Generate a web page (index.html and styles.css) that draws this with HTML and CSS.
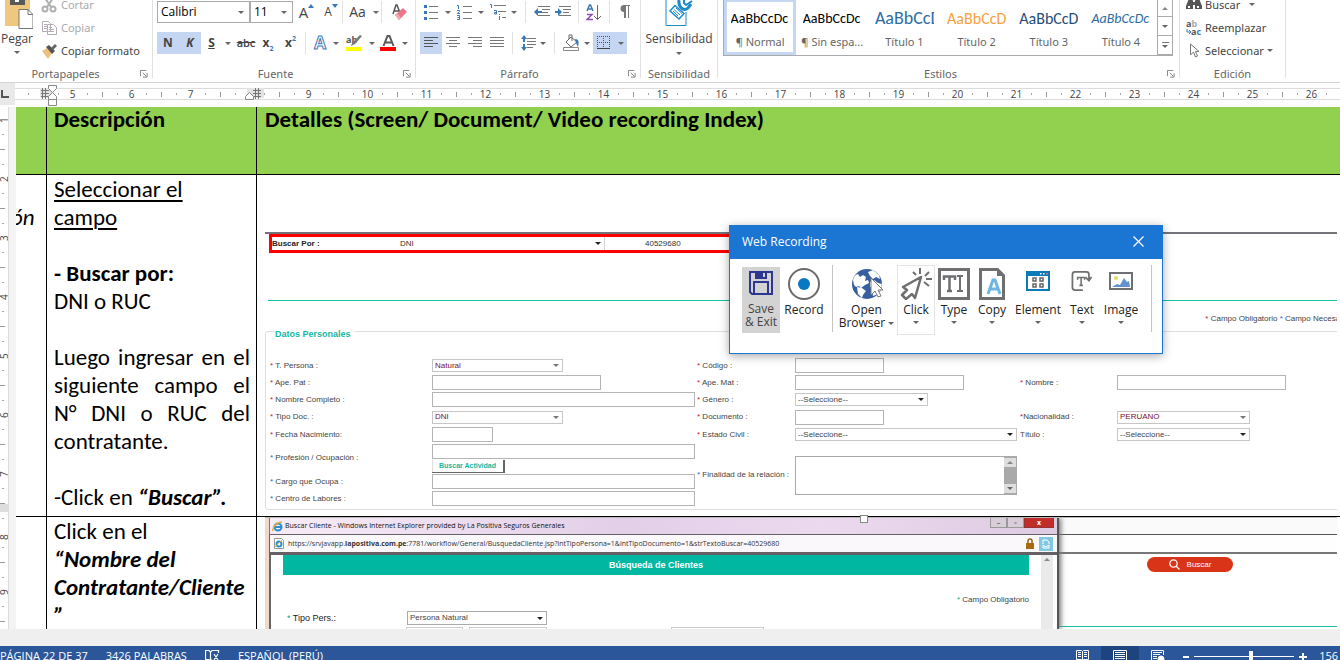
FILE: index.html
```html
<!DOCTYPE html>
<html lang="es">
<head>
<meta charset="utf-8">
<title>Documento</title>
<link rel="stylesheet" href="styles.css">
</head>
<body>
<header class="ribbon">
  <section class="group clipboard">
    <div class="clip-body">
      <button class="paste">
        <svg width="32" height="30" viewBox="0 0 32 30"><path d="M4 0h25v26H4z" fill="#edc87e"/><path d="M9 0h15v5H9z" fill="#595959"/><path d="M14 0h4v2h-4z" fill="#fff"/><path d="M18 9.500h9l5 5v14H18z" fill="#fff" stroke="#777"/><path d="M27 9.500v5h5" fill="none" stroke="#777"/></svg>
        <span>Pegar</span><i class="caret"></i>
      </button>
      <div class="clip-list">
        <button class="off"><svg width="16" height="16" viewBox="0 0 16 16" fill="none" stroke="#b0b0b0" stroke-width="2"><path d="M4 1l6 9M12 1l-6 9"/><circle cx="4" cy="12" r="2.5"/><circle cx="12" cy="12" r="2.5"/></svg>Cortar</button>
        <button class="off"><svg width="16" height="16" viewBox="0 0 16 16" fill="#fff" stroke="#b3adb3"><path d="M1.500 1.500h6l2 2v8h-8zM6.500 4.500h6l3 3v7h-9z"/><path d="M3 4.500h3M3 6.500h3M3 8.500h3M8 9.500h5M8 11.500h5M8 7.500h3"/></svg>Copiar</button>
        <button><svg width="16" height="16" viewBox="0 0 16 16"><path d="M1 8l5-3 5 5-4 6z" fill="#edc080"/><path d="M5 4l3-2 6 6-3 3z" fill="#555"/><path d="M10 5l4-4 2 2-4 4z" fill="#666"/></svg>Copiar formato</button>
      </div>
    </div>
    <footer><span>Portapapeles</span><svg class="launch" viewBox="0 0 9 9"><path d="M.5 7V.5H7M3 3l4 4M8 3.500V8H3.500" fill="none" stroke="#777"/></svg></footer>
  </section>

  <section class="group font">
    <div class="tools font-a">
      <label class="combo"><select aria-label="Fuente"><option>Calibri</option></select><i class="caret"></i></label>
      <label class="combo second"><select aria-label="Tamaño"><option>11</option></select><i class="caret"></i></label>
      <button class="grow">A<svg width="6" height="4" viewBox="0 0 6 4"><path d="M0 4l3-4 3 4z" fill="#3b78b8"/></svg></button>
      <button class="grow small">A<svg width="6" height="4" viewBox="0 0 6 4"><path d="M0 0l3 4 3-4z" fill="#3b78b8"/></svg></button>
      <i class="rule"></i>
      <button class="case">Aa</button><i class="caret"></i><i class="rule"></i>
      <button><svg width="16" height="18" viewBox="0 0 16 18"><path d="M1 11L4 2h1l3 8M2.500 8h4" fill="none" stroke="#555" stroke-width="1.500"/><path d="M3 12l8-7 4 4-8 8z" fill="#e8798b"/><path d="M3 12l2-2 4 5-2 2z" fill="#f2a9b4"/></svg></button>
    </div>
    <div class="tools font-b">
      <button class="on bold">N</button><button class="on bold ital">K</button><button class="bold und">S</button><i class="caret"></i>
      <button class="strike">abc</button><button class="bold sub">x<sub>2</sub></button><button class="bold sub">x<sup>2</sup></button><i class="rule"></i>
      <button class="glow">A</button><i class="caret"></i>
      <button><svg width="17" height="18" viewBox="0 0 17 18"><text x="0" y="9" class="ab">ab</text><path d="M16 2L9 10l-4 2 1-3 8-8z" fill="#777"/><path d="M0 13h16v4H0z" fill="#ff0"/></svg></button><i class="caret"></i>
      <button><svg width="17" height="18" viewBox="0 0 17 18"><path d="M3.500 12L7.500 2h2l4 10M5 8.500h7" fill="none" stroke="#595959" stroke-width="2"/><path d="M0 13h16v4H0z" fill="#f00"/></svg></button><i class="caret"></i>
    </div>
    <footer><span>Fuente</span><svg class="launch" viewBox="0 0 9 9"><path d="M.5 7V.5H7M3 3l4 4M8 3.500V8H3.500" fill="none" stroke="#777"/></svg></footer>
  </section>

  <section class="group para">
    <div class="tools para-a">
      <button><svg width="14" height="16" viewBox="0 0 14 16"><path d="M5 2.500h9M5 8.500h9M5 14.500h9" stroke="#777"/><path d="M0 1h3v3H0zM0 7h3v3H0zM0 13h3v3H0z" fill="#3b78b8"/></svg></button><i class="caret"></i>
      <button><svg width="15" height="16" viewBox="0 0 15 16"><path d="M6 2.500h9M6 8.500h9M6 14.500h9" stroke="#777"/><path d="M0 1.500h1.500V5M0 6.500h2.500v1L.5 9.500H3M0 11.500h2.500v4H0M.5 13.500h2" fill="none" stroke="#3b78b8"/></svg></button><i class="caret"></i>
      <button><svg width="17" height="16" viewBox="0 0 17 16"><path d="M4 1.500h12M8 7.500h8M12 13.500h4" stroke="#777"/><path d="M0 .5h1.500V4M4 6.500h2.500V10H4.500V8.500H6M9.500 10v1M9.500 12v4" fill="none" stroke="#3b78b8"/></svg></button><i class="caret"></i><i class="rule"></i>
      <button><svg width="16" height="12" viewBox="0 0 16 12"><path d="M4 .5h12M8 3.500h8M8 6.500h6M4 9.500h12" stroke="#777"/><path d="M0 6l4-4v3h4v2H4v3z" fill="#3b78b8"/></svg></button>
      <button><svg width="16" height="12" viewBox="0 0 16 12"><path d="M4 .5h12M8 3.500h8M8 6.500h6M4 9.500h12" stroke="#777"/><path d="M7 6L3 2v3H0v2h3v3z" fill="#3b78b8"/></svg></button><i class="rule"></i>
      <button><svg width="15" height="17" viewBox="0 0 15 17" fill="none"><path d="M1 7L3.500 1h1L7 7M2 5h4" stroke="#3b78b8" stroke-width="1.500"/><path d="M1 10.500h5L1 15.500h6" stroke="#8a50b5" stroke-width="1.500"/><path d="M11.500 1v14M8 12l3.500 3.500L15 12" stroke="#666"/></svg></button><i class="rule"></i>
      <button><svg width="11" height="14" viewBox="0 0 11 14"><path d="M5 7a3 3 0 0 1 0-7h6v1h-1v12H9V1H7v12H5z" fill="#777"/></svg></button>
    </div>
    <div class="tools para-b">
      <button class="on"><svg width="14" height="12" viewBox="0 0 14 12"><path d="M0 .5h14M0 3.500h9M0 6.500h14M0 9.500h9" stroke="#555"/></svg></button>
      <button><svg width="14" height="12" viewBox="0 0 14 12"><path d="M0 .5h14M3 3.500h8M0 6.500h14M3 9.500h8" stroke="#777"/></svg></button>
      <button><svg width="14" height="12" viewBox="0 0 14 12"><path d="M0 .5h14M5 3.500h9M0 6.500h14M5 9.500h9" stroke="#777"/></svg></button>
      <button><svg width="14" height="12" viewBox="0 0 14 12"><path d="M0 .5h14M0 3.500h14M0 6.500h14M0 9.500h14" stroke="#777"/></svg></button><i class="rule"></i>
      <button><svg width="15" height="16" viewBox="0 0 15 16"><path d="M6 3.500h9M6 6.500h9M6 9.500h9M6 12.500h6" stroke="#777"/><path d="M0 4l3-4 3 4H4v3H2V4zM0 12l3 4 3-4H4V9H2v3z" fill="#3b78b8"/></svg></button><i class="caret"></i><i class="rule"></i>
      <button><svg width="17" height="18" viewBox="0 0 17 18"><path d="M3 8l5-5 6 5-6 5zM6 5V1h3v6" fill="#fff" stroke="#666"/><path d="M12 5c4 0 4 3 3 8l-2-4z" fill="#3b78b8"/><path d="M.5 13.500h15v3H.5z" fill="#fff" stroke="#888"/></svg></button><i class="caret"></i>
      <button class="on"><svg width="13" height="14" viewBox="0 0 13 14"><path d="M.5 0v13M6.500 0v13M12.500 0v13M0 .5h13M0 6.500h13" stroke="#555" stroke-dasharray="1 1"/><path d="M0 12.500h13" stroke="#444"/></svg></button><button class="on" aria-label="Bordes"><i class="caret"></i></button>
    </div>
    <footer><span>Párrafo</span><svg class="launch" viewBox="0 0 9 9"><path d="M.5 7V.5H7M3 3l4 4M8 3.500V8H3.500" fill="none" stroke="#777"/></svg></footer>
  </section>

  <section class="group sens">
    <button class="sens-btn">
      <svg width="28" height="26" viewBox="0 0 28 26" fill="none" stroke="#1e8bc9"><path d="M1 0v25.500h20V12"/><path d="M10 5.500l9 8-5 5.500-9-8z" stroke-width="1.500" fill="#fff"/><path d="M9 9.500l6 5.500M11 8l6 5.500M8 11l5 5" stroke-width="1"/><path d="M14 0c-1 7 5 12 9 8l3-4" stroke-width="3"/><path d="M19 0v3l2 2 6-4" stroke-width="2"/></svg>
      <span>Sensibilidad</span><i class="caret"></i>
    </button>
    <footer><span>Sensibilidad</span></footer>
  </section>

  <section class="group styles">
    <div class="gallery">
      <button class="style chosen"><b>AaBbCcDc</b><span>¶ Normal</span></button>
      <button class="style"><b>AaBbCcDc</b><span>¶ Sin espa...</span></button>
      <button class="style big blue"><b>AaBbCcD</b><span>Título 1</span></button>
      <button class="style mid orange"><b>AaBbCcDc</b><span>Título 2</span></button>
      <button class="style mid navy"><b>AaBbCcD</b><span>Título 3</span></button>
      <button class="style blue slant"><b>AaBbCcDc</b><span>Título 4</span></button>
      <div class="steps">
        <button aria-label="Arriba"><i class="caret up"></i></button>
        <button aria-label="Abajo"><i class="caret"></i></button>
        <button class="more" aria-label="Más"><i class="caret"></i></button>
      </div>
    </div>
    <footer><span>Estilos</span><svg class="launch" viewBox="0 0 9 9"><path d="M.5 7V.5H7M3 3l4 4M8 3.500V8H3.500" fill="none" stroke="#777"/></svg></footer>
  </section>

  <section class="group edit">
    <div class="clip-list">
      <button><svg width="16" height="14" viewBox="0 0 16 14" fill="#555"><path d="M2 3l1-3h3l1 3v8H0V8zM9 3l1-3h3l1 3 2 5v3H9z"/><path d="M6 4h4v3H6z"/><path d="M2 8h2v2H2zM11 8h2v2h-2z" fill="#fff"/></svg>Buscar <i class="caret"></i></button>
      <button><svg width="16" height="16" viewBox="0 0 16 16"><text x="0" y="7" class="ab">a<tspan fill="#aaa">b</tspan></text><text x="5" y="15" class="ab">a<tspan fill="#3b78b8">c</tspan></text><path d="M1 9v3h4M3 10l2 2-2 2" fill="none" stroke="#3b78b8"/></svg>Reemplazar</button>
      <button><svg width="16" height="16" viewBox="0 0 16 16"><path d="M4.500 1v11l3-3 2 5 2-1-2-4.500h3.500z" fill="#fff" stroke="#777"/></svg>Seleccionar<i class="caret"></i></button>
    </div>
    <footer><span>Edición</span></footer>
  </section>
</header>

<div class="ruler">
  <div class="tab-stop"></div>
  <div class="scale">
    <div class="start"></div>
    <span>5</span><span>6</span><span>7</span><span class="blank"></span><span>9</span><span>10</span><span>11</span><span>12</span><span>13</span><span>14</span><span>15</span><span>16</span><span>17</span><span>18</span><span>19</span><span>20</span><span>21</span><span>22</span><span>23</span><span>24</span><span>25</span><span>26</span><span class="past"></span>
  </div>
  <svg class="mark indent" width="20" height="21" viewBox="0 0 20 21"><path d="M1 5.500h8M1 8.500h8M1 11.500h8M2.500 3v11M5.500 3v11" stroke="#777"/><path d="M8.500.5h8v3l-4 4-4-4zM8.500 14.500v-3l4-4 4 4v3zM8.500 14.500h8v6h-8z" fill="#fff" stroke="#888"/></svg>
  <svg class="mark right" width="20" height="21" viewBox="0 0 20 21"><path d="M8 5.500h8M8 8.500h8M8 11.500h8M10.500 3v11M13.500 3v11" stroke="#777"/><path d="M.5 14.500v-3l4-4 4 4v3z" fill="#fff" stroke="#888"/></svg>
</div>

<main class="workspace">
  <div class="vruler"><span>1</span><span>2</span><span>3</span><span>4</span><span>5</span><span>6</span><span>7</span><span class="brk">8</span><span>9</span></div>
  <div class="page">
    <table class="doc">
      <colgroup><col class="c1"><col class="c2"><col></colgroup>
      <thead><tr><th></th><th>Descripción</th><th>Detalles (Screen/ Document/ Video recording Index)</th></tr></thead>
      <tbody>
      <tr class="r2">
        <td class="first"><p><em>ón</em></p></td>
        <td class="desc">
          <p><u>Seleccionar el<br>campo</u></p><p>&nbsp;</p>
          <p><strong>- Buscar por:</strong></p><p>DNI o RUC</p><p>&nbsp;</p>
          <p class="just">Luego ingresar en el siguiente campo el N° DNI o RUC del contratante.</p><p>&nbsp;</p>
          <p>-Click en <strong><em>“Buscar”.</em></strong></p>
        </td>
        <td class="shot">
          <div class="capture">
            <div class="searchbar">
              <label for="por">Buscar Por :</label>
              <span class="pick"><select id="por"><option>DNI</option></select><i class="caret"></i></span>
              <input aria-label="Número" value="40529680">
            </div>
            <div class="legend-line"><span><i class="r">*</i> Campo Obligatorio <i class="b">*</i> Campo Necesario</span></div>
            <fieldset>
              <legend>Datos Personales</legend>
              <div class="form">
                <label for="f1"><i class="r">*</i> T. Persona :</label><span class="pick w131 wine"><select id="f1"><option>Natural</option></select><i class="caret"></i></span>
                <label for="f2"><i class="r">*</i> Código :</label><input id="f2" class="w89"><span></span><span></span>

                <label for="f3"><i class="r">*</i> Ape. Pat :</label><input id="f3" class="w169">
                <label for="f4"><i class="r">*</i> Ape. Mat :</label><input id="f4" class="w169">
                <label for="f5"><i class="r">*</i> Nombre :</label><input id="f5" class="w169">

                <label for="f6"><i class="r">*</i> Nombre Completo :</label><input id="f6" class="w263">
                <label for="f7"><i class="r">*</i> Género :</label><span class="pick w133"><select id="f7"><option>--Seleccione--</option></select><i class="caret"></i></span><span></span><span></span>

                <label for="f8"><i class="r">*</i> Tipo Doc. :</label><span class="pick w131 wine"><select id="f8"><option>DNI</option></select><i class="caret"></i></span>
                <label for="f9"><i class="r">*</i> Documento :</label><input id="f9" class="w89">
                <label for="f10"><i class="r">*</i>Nacionalidad :</label><span class="pick w133 wine"><select id="f10"><option>PERUANO</option></select><i class="caret"></i></span>

                <label for="f11"><i class="r">*</i> Fecha Nacimiento:</label><input id="f11" class="w61">
                <label for="f12"><i class="r">*</i> Estado Civil :</label><span class="pick w222"><select id="f12"><option>--Seleccione--</option></select><i class="caret"></i></span>
                <label for="f13">Título :</label><span class="pick w133"><select id="f13"><option>--Seleccione--</option></select><i class="caret"></i></span>

                <label for="f14" class="two"><i class="b">*</i> Profesión / Ocupación :</label><input id="f14" class="w263">
                <label for="f15" class="four"><i class="b">*</i> Finalidad de la relación :</label>
                <div class="area"><textarea id="f15"></textarea><div class="bar"><i class="caret up"></i><i class="caret"></i></div></div>
                <button class="act">Buscar Actividad</button>
                <label for="f16" class="lab"><i class="b">*</i> Cargo que Ocupa :</label><input id="f16" class="w263">
                <label for="f17" class="lab"><i class="b">*</i> Centro de Labores :</label><input id="f17" class="w263">
              </div>
            </fieldset>
          </div>
        </td>
      </tr>
      <tr class="r3">
        <td></td>
        <td class="desc"><p>Click en el<br><strong><em>“Nombre del Contratante/Cliente<br>”</em></strong></p></td>
        <td class="shot">
          <div class="browser">
            <div class="window">
              <div class="titlebar">
                <svg width="11" height="11" viewBox="0 0 11 11"><circle cx="6" cy="6" r="3.500" fill="none" stroke="#2a8fd0" stroke-width="2"/><path d="M3 6h6" stroke="#2a8fd0" stroke-width="2"/><path d="M1 10C0 6 5 1 10 1" fill="none" stroke="#e3b23a" stroke-width="1.500"/></svg>
                <span>Buscar Cliente - Windows Internet Explorer provided by La Positiva Seguros Generales</span>
                <div class="winbtns"><button aria-label="Minimizar">–</button><button aria-label="Maximizar">▫</button><button class="x" aria-label="Cerrar">x</button></div>
              </div>
              <div class="address">
                <svg width="10" height="11" viewBox="0 0 10 11"><path d="M.5.500h7l2 2v8h-9z" fill="#fff" stroke="#999"/><circle cx="5" cy="6" r="2.500" fill="none" stroke="#2a8fd0" stroke-width="2"/><path d="M1 9l7-7" stroke="#e3b23a"/></svg>
                <span>https://srvjavapp.<b>lapositiva.com.pe</b>:7781/workflow/General/BusquedaCliente.jsp?intTipoPersona=1&amp;intTipoDocumento=1&amp;strTextoBuscar=40529680</span>
                <svg width="10" height="12" viewBox="0 0 10 12"><path d="M3 6V3a2 2 0 0 1 4 0v3" fill="none" stroke="#996018" stroke-width="1.500"/><path d="M1 5h8v6H1z" fill="#a86a10"/></svg>
                <svg class="compat" width="14" height="14" viewBox="0 0 14 14"><path d="M0 0h14v14H0z" fill="#82c8e4"/><path d="M4 3h4l2 2v2M4 3v4M4 8v3h6V8M4 8l3 2 3-2" fill="none" stroke="#fff"/></svg>
              </div>
              <div class="view">
                <div class="sheet">
                  <h2>Búsqueda de Clientes</h2>
                  <p><i class="t">*</i> Campo Obligatorio</p>
                  <div class="tipo"><label for="tp"><i class="t">*</i> Tipo Pers.:</label><span class="pick"><select id="tp"><option>Persona Natural</option></select><i class="caret"></i></span></div>
                  <div class="next"><i></i><i></i><i></i></div>
                </div>
                <div class="vbar"><i class="caret up"></i></div>
              </div>
            </div>
            <div class="behind">
              <div class="b1"></div><div class="b2"></div>
              <div class="b3"><button class="pill"><svg width="11" height="11" viewBox="0 0 11 11" fill="none" stroke="#fff" stroke-width="1.300"><circle cx="4.500" cy="4.500" r="3.700"/><path d="M7 7l3.500 3.500"/></svg>Buscar</button></div>
            </div>
            <i class="handle"></i>
          </div>
        </td>
      </tr>
      </tbody>
    </table>
  </div>

  <section class="dialog" role="dialog" aria-label="Web Recording">
    <header><h1>Web Recording</h1><button aria-label="Close"><svg width="11" height="11" viewBox="0 0 11 11"><path d="M.5.500l10 10M10.500.500l-10 10" stroke="#fff" stroke-width="1.200"/></svg></button></header>
    <div class="rec">
      <button class="save"><svg width="24" height="24" viewBox="0 0 24 24" fill="none" stroke="#2d3691" stroke-width="2"><path d="M1 1h22v22H3l-2-2z"/><path d="M5 23V11h14v12"/><path d="M6 0h12v8H6z" fill="#2d3691" stroke="none"/><path d="M14 2h2v4h-2z" fill="#d3d3d3" stroke="none"/></svg><span>Save<br>&amp; Exit</span></button>
      <button><svg width="32" height="32" viewBox="0 0 32 32"><circle cx="16" cy="16" r="15" fill="#fff" stroke="#6b6b6b" stroke-width="2"/><circle cx="16" cy="16" r="6" fill="#0a77c4"/></svg><span>Record</span></button>
      <i class="div"></i>
      <button><svg width="32" height="32" viewBox="0 0 32 32"><circle cx="16" cy="16" r="15" fill="#365f9f"/><path d="M2 12q1-5 5-6l2 3 3-2 3 2-1 4 3-1 1 3-4 2-4 3-2-2-3 1-2-2zM17 4l5-2 6 5 1 4-4-2-3 2-3-3zM6 19l5 1 4 3-3 4-1 3-4-4zM19 14l4-2 4 3 4 1-1 5-3 5-5 2-1-6-2-4z" fill="#fff"/><path d="M20 10v17l4-4 3 6 3-1-3-6h5z" fill="#fff" stroke="#777"/></svg><span>Open<br>Browser <i class="caret"></i></span></button>
      <button class="hover"><svg width="32" height="32" viewBox="0 0 32 32" fill="none" stroke="#6d6f71" stroke-width="2.500" stroke-linejoin="round"><path d="M21 9L3 19l4 3-5 5 4 4 6-5 3 4z"/><path d="M20 0v6M13 4l3 3M29 4l-4 4M26 11h6M24 14l5 4" stroke-width="2"/></svg><span>Click</span><i class="caret"></i></button>
      <button><svg width="32" height="32" viewBox="0 0 32 32" fill="none" stroke="#6d6f71"><path d="M1.500 1.500h29v29h-29z" stroke-width="3"/><path d="M6 12V8.500h11V12M11.500 8v15M9 23h5" stroke-width="2.500"/><path d="M19 8h6M19 23h6M22 8v15" stroke-width="2"/></svg><span>Type</span><i class="caret"></i></button>
      <button><svg width="26" height="32" viewBox="0 0 26 32" fill="none"><path d="M1.500 1.500h17l6 6v23h-23z" stroke="#6d6f71" stroke-width="3"/><path d="M18 0v8h8z" fill="#6d6f71"/><path d="M9 26l5-14h2l5 14M11 21h8" stroke="#6eb5e3" stroke-width="3"/></svg><span>Copy</span><i class="caret"></i></button>
      <button><svg class="short" width="24" height="20" viewBox="0 0 24 20"><path d="M0 0h24v20H0z" fill="#0a7ab8"/><path d="M2 5h20v13H2z" fill="#fff"/><path d="M7 7h3v3H7zM14 7h3v3h-3zM7 13h3v3H7zM14 13h3v3h-3z" fill="none" stroke="#666" stroke-width="1.500"/><path d="M14 2h1.500v1.500H14zM17 2h1.500v1.500H17z" fill="#fff"/><path d="M20 2h2v1.500h-2z" fill="#f66"/></svg><span>Element</span><i class="caret"></i></button>
      <button><svg class="short" width="24" height="23" viewBox="0 0 24 23" fill="none" stroke="#6d6f71"><path d="M13 22H4a3 3 0 0 1-3-3V4a3 3 0 0 1 3-3h13q3 0 3 3v6M16 7l4 4 3-4" stroke-width="2"/><path d="M7 10V7.500h8V10M11 7v9M9 16.500h4" stroke-width="1.800"/></svg><span>Text</span><i class="caret"></i></button>
      <button><svg class="short" width="24" height="18" viewBox="0 0 24 18"><path d="M1 1h22v16H1z" fill="#fff" stroke="#6d6f71" stroke-width="2"/><circle cx="7" cy="6" r="2" fill="#f2d45c"/><path d="M3 15l5-3 3 1 4-7 3 4 2-1 1 6z" fill="#6390cf"/></svg><span>Image</span><i class="caret"></i></button>
      <i class="div last"></i>
    </div>
  </section>
</main>

<footer class="status">
  <span>PÁGINA 22 DE 37</span><span>3426 PALABRAS</span>
  <svg width="15" height="13" viewBox="0 0 15 13" fill="none" stroke="#fff"><path d="M5.500 12V2.500L4 .5H.5v9H4l1.500 2L7 9.500M5.500 2.500L7 .500h6.500V3M9 4l4 6M13 4l-4 6" stroke-width="1.200"/></svg>
  <span>ESPAÑOL (PERÚ)</span>
  <div class="views">
    <button aria-label="Lectura"><svg width="13" height="12" viewBox="0 0 13 12" fill="none" stroke="#fff"><path d="M.5.500h5l1 1 1-1h5v9h-5l-1 1-1-1h-5zM6.500 1v10M2 2.500h3M2 4.500h3M2 6.500h3M8 2.500h3M8 4.500h3M8 6.500h3"/></svg></button>
    <button class="cur" aria-label="Impresión"><svg width="14" height="12" viewBox="0 0 14 12" fill="none" stroke="#fff"><path d="M.5.500h13V12H.5zM2 2.500h10M2 4.500h10M2 6.500h10M2 8.500h10"/></svg></button>
    <button aria-label="Web"><svg width="14" height="12" viewBox="0 0 14 12" fill="none" stroke="#fff"><path d="M12.500 5V.5H.5V12M2 2.500h9M2 4.500h7M2 6.500h4M2 8.500h4"/><circle cx="10" cy="9" r="3" fill="#fff"/></svg></button>
  </div>
  <div class="zoom"><b></b><input type="range" min="0" max="100" value="57" aria-label="Zoom"><b class="plus"></b><span>156 %</span></div>
</footer>
</body>
</html>
```
FILE: styles.css
```css
* { box-sizing: border-box; }
body {
  margin: 0; height: 100vh; overflow: hidden;
  display: flex; flex-direction: column;
  background: #fff; color: #444;
  font: 12px/16px "Segoe UI", "Open Sans", sans-serif;
}
button, select, input, textarea { font: inherit; color: inherit; margin: 0; padding: 0; border: 0; background: none; border-radius: 0; }
button { display: flex; align-items: center; justify-content: center; white-space: nowrap; }
select, input:not([type=range]), textarea { appearance: none; min-width: 0; }
svg { display: block; flex: none; }
p, h1, h2 { margin: 0; }
i.caret { display: block; width: 0; height: 0; flex: none; border: 3px solid transparent; border-top-color: #666; border-bottom: 0; }
i.caret.up { border-top: 0; border-bottom: 3px solid #888; }

/* Ribbon */
.ribbon { flex: none; display: flex; height: 83px; border-bottom: 1px solid #d4d4d4; overflow: hidden; }
.group { display: flex; flex-direction: column; border-right: 1px solid #e1e1e1; height: 78px; flex: none; }
.group > footer { display: flex; align-items: center; margin-top: auto; height: 16px; margin-bottom: -4px; color: #666; font: 11px/16px "Noto Sans", sans-serif; padding: 0 4px; }
.group > footer span { flex: 1; text-align: center; padding-right: 13px; }
.launch { width: 8px; height: 8px; }
.clipboard { width: 153px; }
.font { width: 263px; padding: 1px 0 0 4px; }
.para { width: 225px; padding: 1px 0 0 4px; }
.sens { width: 77px; }
.styles { flex: 0 1 462px; padding: 0 6px 0 5px; }
.styles > footer { margin-right: -6px; }
.edit { width: 106px; padding-left: 6px; }
.edit > footer { margin-left: -6px; }
.group.edit > footer span, .group.sens > footer span { padding-right: 0; }
.clip-body { display: flex; }
.paste { flex-direction: column; justify-content: flex-start; width: 36px; padding-right: 2px; }
.paste span { margin: 1px 0 4px; }
.clip-list { display: flex; flex-direction: column; margin: -7px 0 0 5px; font: 11px/16px "Noto Sans", sans-serif; }
.edit .clip-list { margin-left: 0; }
.clip-list button { height: 23px; gap: 4px; justify-content: flex-start; }
.edit .clip-list button { gap: 3px; }
.clip-list .off { color: #aaa; }
.edit .clip-list button:first-child .caret { margin-left: 6px; }
.tools { display: grid; height: 22px; align-items: stretch; }
.tools + .tools { margin-top: 9px; }
.tools > .caret, .tools .rule { place-self: center; }
.rule { width: 1px; height: 22px; background: #e1e1e1; }
.on { background: #c4d6f2; }
.font-a { grid-template-columns: 93px 43px 27px 22px 1px 29px 8px 3px 33px; }
.font-b { grid-template-columns: 22px 22px 21px 12px 24px 20px 25px 4px 26px 6px 30px 5px 28px 6px; }
.para-a { grid-template-columns: 21px 13px 21px 12px 23px 7px 16px 18px 24px 6px 24px 8px 23px; }
.para-b { grid-template-columns: 22px 22px 22px 22px 9px 22px 7px 16px 18px 13px 21px 13px; }
.combo { display: grid; grid-template: 1fr / 1fr 17px; align-items: center; border: 1px solid #ababab; color: #000; }
.combo select { grid-area: 1 / 1 / 2 / 3; padding-left: 3px; height: 20px; }
.combo .caret { grid-area: 1 / 2; place-self: center; }
.grow { font-size: 15px; }
.grow.small { font-size: 12px; }
.grow svg { margin-bottom: 12px; }
.case { font-size: 14px; }
.bold { font-weight: 700; }
.ital { font-style: italic; }
.und { text-decoration: underline; }
.strike { text-decoration: line-through; font-size: 11px; font-weight: 600; }
.sub sub, .sub sup { font-size: 7px; color: #3b78b8; line-height: 10px; }
.sub sub { align-self: flex-end; }
.sub sup { align-self: flex-start; margin-top: 2px; }
.glow { font-size: 17px; font-weight: 700; color: #fff; -webkit-text-stroke: 1px #3b78b8; }
.ab { font: 700 9px "Open Sans", sans-serif; fill: #555; }
.sens-btn { flex-direction: column; justify-content: flex-start; }
.sens-btn span { margin: 5px 0; }
.group.sens > footer { padding: 0; }

.gallery { display: flex; height: 56px; border: 1px solid #ababab; border-top: 0; overflow: hidden; }
.style { flex: 1 1 72px; min-width: 0; flex-direction: column; justify-content: flex-start; gap: 4px; padding: 4px 0 0; color: #666; font: 11px/16px "Noto Sans", sans-serif; border: 3px solid transparent; border-top-width: 2px; }
.style.chosen { border-color: #c4d6f2; }
.style b { flex: none; width: 59px; height: 24px; overflow: hidden; font: 400 14px/25px Calibri, Carlito, Lato, sans-serif; color: #000; text-align: left; }
.style.big b { font-size: 18px; }
.style.mid b { font-size: 16px; }
.style.blue b { color: #2e6da4; }
.style.orange b { color: #f7a13c; }
.style.navy b { color: #1f4e79; }
.style.slant b { font-style: italic; }
.steps { width: 15px; flex: none; display: grid; grid-template-rows: 17px 19px 19px; }
.steps button { border-left: 1px solid #ababab; border-bottom: 1px solid #ababab; }
.more { flex-direction: column; gap: 2px; }
.more::before { content: ""; width: 7px; height: 1px; background: #777; }

/* Rulers */
.ruler { position: relative; flex: none; display: flex; height: 24px; background: #fdfdfd; align-items: center; padding-bottom: 3px; }
.tab-stop { width: 15px; height: 22px; background: #e9e9e9; display: grid; align-items: center; flex: none; }
.tab-stop::after { content: ""; width: 6px; height: 6px; margin-left: 1px; border: solid #555; border-width: 0 0 2px 2px; }
.scale { flex: 1; min-width: 0; height: 12px; display: flex; overflow: hidden; border: solid #dcdcdc; border-width: 1px 0; background: #fff; color: #444; font-size: 10px; line-height: 10px; }
.scale .start { flex: 0 0 28px; background: linear-gradient(#999, #999) 13px 4px / 1px 2px no-repeat; }
.scale span {
  flex: 0 0 59px; text-align: center;
  background: linear-gradient(#999, #999) 0 3px / 1px 5px no-repeat, linear-gradient(#aaa, #aaa) 15px 4px / 1px 2px no-repeat, linear-gradient(#aaa, #aaa) 44px 4px / 1px 2px no-repeat;
}
.scale .past { background: #e3e3e3; }
.mark { position: absolute; top: 2px; }
.indent { left: 40px; background: linear-gradient(#e3e3e3, #e3e3e3) 0 3px / 14px 10px no-repeat; }
.right { left: 245px; background: linear-gradient(#e3e3e3, #e3e3e3) 2px 3px / 17px 10px no-repeat; }
.workspace { position: relative; flex: 1; min-height: 0; display: flex; overflow: hidden; border-bottom: 17px solid #efefef; }
.vruler { flex: none; width: 9px; height: 100%; overflow: hidden; margin-right: 7px; border-right: 1px solid #dcdcdc; display: flex; flex-direction: column; font-size: 10px; line-height: 8px; box-shadow: 7px 0 #f4f4f4; }
.vruler span {
  flex: 0 0 59px; writing-mode: vertical-rl; transform: rotate(180deg); text-align: center;
  background: linear-gradient(#999, #999) 3px 0 / 5px 1px no-repeat, linear-gradient(#aaa, #aaa) 4px 15px / 2px 1px no-repeat, linear-gradient(#aaa, #aaa) 4px 44px / 2px 1px no-repeat;
}
.vruler span:first-child { margin-top: -16px; }
.vruler .brk { border-bottom: 8px solid #ddd; }

/* Document */
.page { flex: 1; min-width: 0; background: #fff; overflow: hidden; }
.doc { width: 100%; table-layout: fixed; border-collapse: separate; border-spacing: 0; color: #000; font: 23px/28px Calibri, Carlito, Lato, sans-serif; }
.c1 { width: 31px; }
.c2 { width: 210px; }
.doc th, .doc td { vertical-align: top; border: solid #000; border-width: 0 1px 1px 0; padding: 0 6px 0 7px; text-align: left; }
.doc th { height: 68px; background: #92d050; line-height: 24px; white-space: nowrap; }
.doc th:last-child { padding-left: 8px; }
.doc .first { padding: 28px 0 0; overflow: hidden; }
.doc .first em { margin-left: -5px; }
.doc th:last-child, .doc td:last-child { border-right: 0; }
.r2 td { height: 342px; }
u { text-decoration-thickness: 2px; text-underline-offset: 3px; }
.just { text-align: justify; }
.doc .shot { padding: 0 3px 0 8px; font: 8px/10px "Liberation Sans", Arial, sans-serif; color: #444; }
.doc .r3 td { border-bottom: 0; }

.capture { margin-top: 57px; border-top: 2px solid #74747c; overflow: hidden; }
.searchbar { display: flex; align-items: center; height: 19px; margin: 0 174px 0 4px; border: 3px solid #f00; color: #333; }
.searchbar label { width: 126px; color: #222; font-weight: 700; }
.pick { display: grid; grid-template: 1fr / 1fr 12px; align-items: center; height: 13px; border: 1px solid #d2d2d2; }
.pick select { grid-area: 1 / 1 / 2 / 3; height: 11px; padding-left: 2px; font-size: 8px; line-height: 10px; }
.pick .caret { grid-area: 1 / 2; place-self: center; border-top-color: #222; }
.searchbar .pick { width: 207px; border-width: 0 1px 0 0; }
.searchbar input { margin-left: 40px; width: 80px; font-size: 8px; }
.legend-line { margin: 47px 0 0 3px; border-top: 1px solid #19bfa8; height: 27px; padding-top: 13px; display: flex; justify-content: flex-end; white-space: nowrap; }
.legend-line span { margin-right: -12px; }
.shot i.r, .shot i.b, .shot i.t { font-style: normal; color: #c21c3c; }
.shot i.b { color: #2868d8; }
.shot i.t { color: #10a894; }
fieldset { margin: 0 -4px 0 0; padding: 0 0 2px 4px; border: 1px solid #dedede; border-radius: 3px; min-width: 0; }
legend { margin-left: 5px; padding: 0 4px 0 0; height: 8px; line-height: 14px; font-size: 9px; font-weight: 700; color: #12b8a2; }
.form { padding-top: 22px; display: grid; grid-template-columns: 162px 265px 98px 225px 97px 1fr; grid-template-rows: 17px 17px 17px 18px 17px 17px 13px 17px 17px; align-items: center; white-space: nowrap; }
.form input { height: 15px; border: 1px solid #b4b4b4; }
.form .pick { border-color: #c6c6c6; }
.wine { color: #7c1230; }
.wine select { -webkit-text-stroke: 0; }
.form .wine .caret { border-top-color: #777; }
.w61 { width: 61px; }
.w89 { width: 89px; }
.w131 { width: 131px; }
.w133 { width: 133px; }
.w169 { width: 169px; }
.w222 { width: 222px; }
.w263 { width: 263px; }
.two { grid-row: 6 / 8; grid-column: 1; }
.four { grid-row: 6 / 10; grid-column: 3; }
#f14 { grid-area: 6 / 2; }
.area { grid-row: 6 / 10; grid-column: 4; width: 222px; height: 39px; display: flex; border: 1px solid #aaa; }
.area textarea { flex: 1; resize: none; }
.bar { width: 12px; background: #a9a9a9; display: flex; flex-direction: column; justify-content: space-between; align-items: center; padding: 4px 0; }
.bar .caret { outline: 3px solid #dedede; background: #dedede; }
.act { grid-area: 7 / 2; width: 73px; height: 13px; justify-self: start; color: #12b8a2; font-size: 7px; font-weight: 700; border: solid #666; border-width: 0 2px 1px 0; box-shadow: inset 1px 0 #ddd; }
.lab { grid-column: 1; }

/* Browser capture */
.browser { position: relative; display: flex; height: 112px; border-top: 1px solid #bbb; }
.window { flex: 0 1 794px; min-width: 0; display: flex; flex-direction: column; border-left: 4px solid #efd9c9; border-right: 2px solid #555; background: #fff; z-index: 1; box-shadow: 2px 0 5px #777; clip-path: inset(0 -10px 0 0); }
.titlebar { display: flex; align-items: center; height: 17px; flex: none; padding-left: 2px; gap: 2px; background: linear-gradient(90deg, #f7ecf7, #e3cfe8 45%, #ecd9ef 70%, #decbe3); border-bottom: 1px solid #686068; border-left: 1px solid #777; font: 7px/12px "Open Sans", sans-serif; color: #111; }
.titlebar span { flex: 1; white-space: nowrap; overflow: hidden; }
.winbtns { display: flex; align-self: flex-start; height: 10px; margin-right: 3px; }
.winbtns button { width: 17px; border: 1px solid #999; border-top: 0; background: #d8cdd9; line-height: 8px; color: #333; }
.winbtns .x { width: 30px; background: #c12d28; color: #fff; font-weight: 700; border-color: #933; }
.address { display: flex; align-items: center; gap: 4px; flex: none; height: 20px; padding: 0 4px; border: solid #665f66; border-width: 0 0 3px 1px; background: #fbf8fc; font: 7px/12px "Open Sans", sans-serif; color: #333; white-space: nowrap; }
.address span { flex: 1; overflow: hidden; }
.view { flex: 1; min-height: 0; display: flex; border-left: 2px solid #666; }
.sheet { flex: 1; padding: 0 12px; overflow: hidden; }
.sheet h2 { height: 20px; background: #00b8a2; color: #fff; text-align: center; font-size: 9px; line-height: 20px; }
.sheet p { text-align: right; margin-top: 20px; }
.tipo { display: flex; align-items: center; margin-top: 6px; padding-left: 4px; }
.tipo label { width: 120px; font-size: 9px; color: #222; }
.tipo .pick { width: 140px; height: 14px; border-color: #aaa; }
.next { display: flex; padding-left: 123px; margin-top: 2px; gap: 6px; }
.next i { width: 57px; height: 8px; border: 1px solid #ccc; }
.next i:nth-child(2) { width: 78px; }
.next i:nth-child(3) { width: 93px; margin-left: 118px; }
.vbar { width: 12px; margin-right: 4px; background: #eaeaea; display: flex; justify-content: center; }
.vbar .caret { margin-top: 3px; }
.behind { flex: 1; min-width: 0; }
.b1 { height: 17px; border-bottom: 1px solid #555; background: #fbfafb; }
.b2 { height: 19px; border-bottom: 2px solid #777; background: #fefefe; }
.b3 { height: 73px; padding: 3px 0 0 88px; border-bottom: 1px solid #19bfa8; }
.pill { width: 86px; height: 15px; border-radius: 8px; background: #d93417; color: #fff; gap: 7px; }
.handle { position: absolute; z-index: 2; left: 595px; top: -3px; width: 8px; height: 8px; border: 1px solid #888; background: #fff; }

/* Recorder window */
.dialog { position: absolute; z-index: 3; top: 118px; right: 177px; width: 434px; height: 129px; border: 1px solid #1a76d2; background: #fff; color: #222; box-shadow: 0 2px 9px rgba(0, 0, 0, .35); }
.dialog header { display: flex; align-items: center; justify-content: space-between; height: 33px; background: #1a76d2; color: #fff; padding: 0 18px 2px 12px; }
.dialog h1 { font-size: 12px; font-weight: 400; }
.rec { display: grid; grid-template-columns: 38px 48px 8px 61px 38px 38px 38px 54px 34px 44px 17px; align-items: start; padding: 6px 0 0 12px; line-height: 13px; }
.rec button { flex-direction: column; justify-content: flex-start; min-width: 0; height: 70px; padding-top: 3px; }
.rec button > span { margin-top: 3px; line-height: 13px; text-align: center; }
.rec button > .caret { margin-top: 5px; }
.rec svg.short { margin: 3px 0 9px; height: 20px; }
.rec span .caret { display: inline-block; vertical-align: middle; }
.rec .save { height: 66px; margin-top: 2px; background: #d3d3d3; color: #444; padding-top: 4px; }
.rec .save > span { margin-top: 7px; }
.rec .hover { border: 1px solid #e4e4e4; padding-top: 2px; }
.div { width: 1px; height: 67px; background: #c4c4c4; justify-self: center; }

/* Status bar */
.status { flex: none; height: 14px; overflow: hidden; display: flex; align-items: flex-start; background: #2b579a; color: #fff; font-size: 11px; line-height: 19px; gap: 18px; }
.status > svg { margin-top: 4px; }
.views { margin-left: auto; display: flex; }
.views button { width: 38px; height: 20px; }
.views .cur { background: #1e4480; }
.zoom { display: flex; align-items: flex-start; gap: 5px; height: 20px; margin-right: -10px; margin-left: -12px; white-space: nowrap; }
.zoom b { width: 6px; height: 2px; background: #fff; margin-top: 10px; flex: none; }
.zoom b.plus { width: 8px; background: linear-gradient(#fff, #fff) 0 3px / 8px 2px no-repeat, linear-gradient(#fff, #fff) 3px 0 / 2px 8px no-repeat; height: 8px; margin-top: 7px; }
.zoom span { margin-left: 7px; }
.zoom input { appearance: none; width: 100px; height: 20px; margin: 0; background: linear-gradient(#fff, #fff) 0 10px / 100% 1px no-repeat; }
.zoom input::-webkit-slider-thumb { appearance: none; width: 4px; height: 10px; background: #fff; border-radius: 0; }
```
